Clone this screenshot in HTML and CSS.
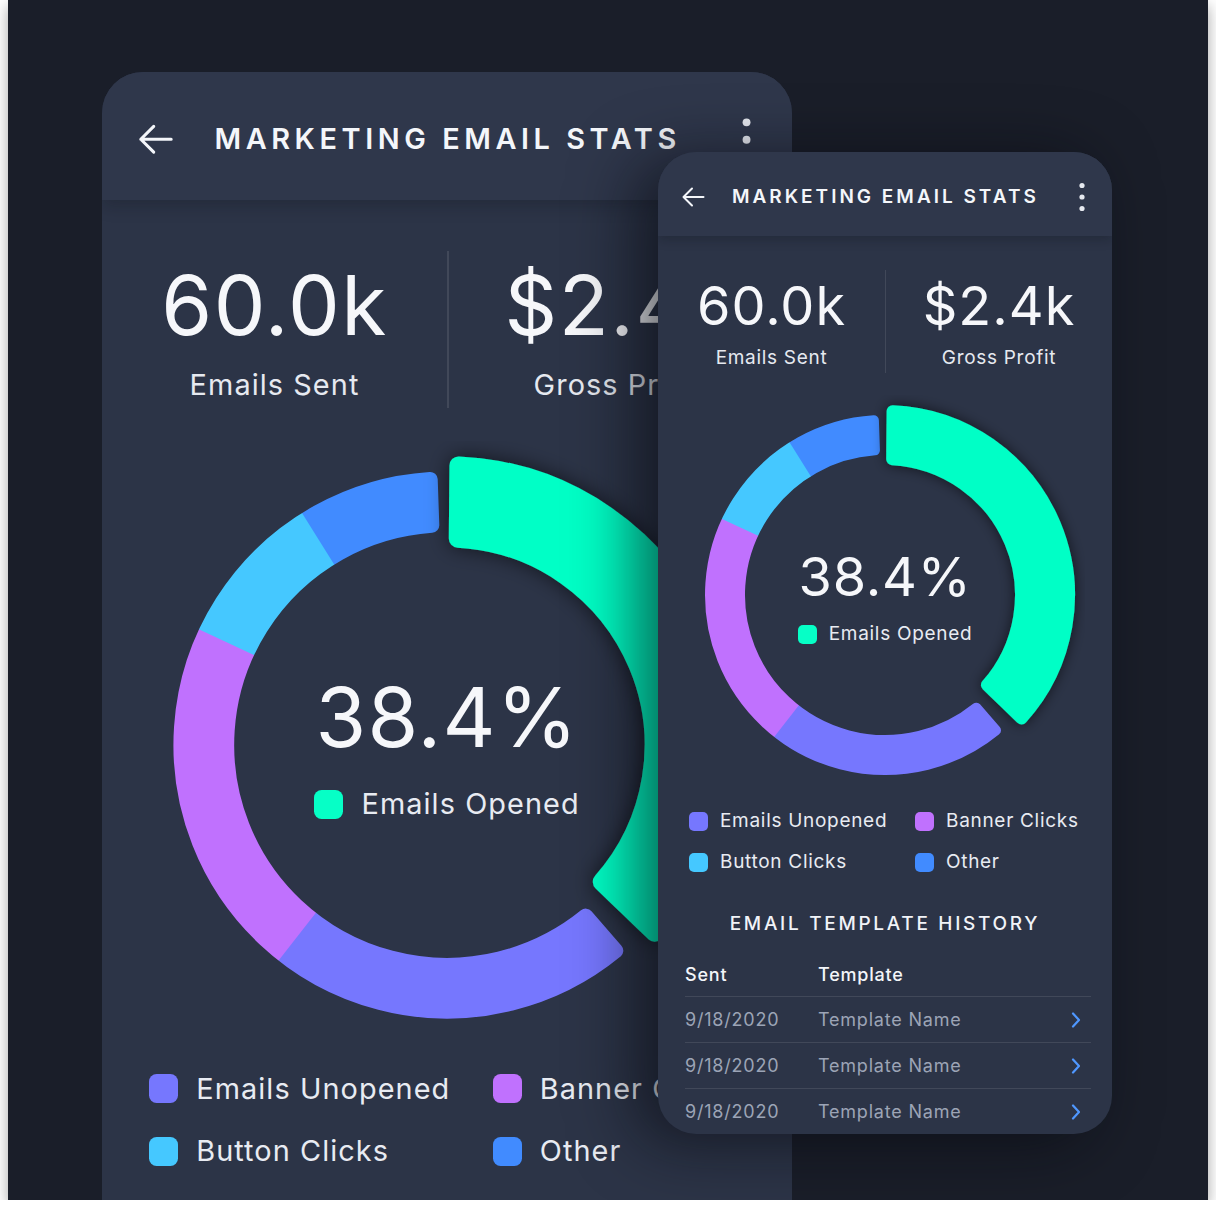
FILE: index.html
```html
<!DOCTYPE html>
<html lang="en">
<head>
<meta charset="utf-8">
<title>Marketing Email Stats</title>
<link rel="stylesheet" href="styles.css">
</head>
<body>
<div class="panel">

  <section class="card card-main">
    <header class="card-header">
      <svg class="icon-back" width="24" height="24" viewBox="0 0 24 24"><path d="M22.5 12H2.5M11 3.5L2.5 12L11 20.5" fill="none" stroke="#f4f6fa" stroke-width="2" stroke-linecap="round" stroke-linejoin="round"/></svg>
      <h1 class="card-title">MARKETING EMAIL STATS</h1>
      <svg class="icon-more" width="6" height="30" viewBox="0 0 6 30"><circle cx="3" cy="3.5" r="2.6" fill="#e6e9f0"/><circle cx="3" cy="15" r="2.6" fill="#e6e9f0"/><circle cx="3" cy="26.5" r="2.6" fill="#e6e9f0"/></svg>
    </header>
    <div class="stats">
      <div class="stat"><div class="stat-value">60.0k</div><div class="stat-label">Emails Sent</div></div>
      <div class="stat"><div class="stat-value">$2.4k</div><div class="stat-label">Gross Profit</div></div>
    </div>
    <div class="donut">
      <svg width="400" height="400" viewBox="0 0 400 400">
        <defs>
          <mask id="ringA" maskUnits="userSpaceOnUse" x="0" y="0" width="400" height="400">
            <path d="M310.99 335.31A175 175 0 1 1 188.89 25.35L189.94 55.35A145 145 0 1 0 291.29 312.65Z" fill="#fff" stroke="#fff" stroke-width="10" stroke-linejoin="round"/>
          </mask>
          <filter id="glowA" x="-30%" y="-30%" width="160%" height="160%">
            <feDropShadow dx="0" dy="0" stdDeviation="7" flood-color="#0e1119" flood-opacity="0.6"/>
          </filter>
        </defs>
        <g mask="url(#ringA)">
          <path d="M200 200L353.21 328.56A200 200 0 0 1 71.44 353.21Z" fill="#7677fe"/>
          <path d="M200 200L76.86 357.60A200 200 0 0 1 21.80 109.20Z" fill="#c071fe"/>
          <path d="M200 200L18.74 115.48A200 200 0 0 1 100.00 26.79Z" fill="#45c8ff"/>
          <path d="M200 200L94.02 30.40A200 200 0 0 1 217.43 0.76Z" fill="#418bff"/>
        </g>
        <path d="M207.61 16.16A184 184 0 0 1 336.49 323.39L301.92 290.05A136 136 0 0 0 207.19 64.19Z" fill="#06ffc6" stroke="#06ffc6" stroke-width="12" stroke-linejoin="round" filter="url(#glowA)"/>
      </svg>
      <div class="donut-center">
        <div class="donut-value">38.4%</div>
        <div class="legend-item"><span class="swatch swatch-green"></span>Emails Opened</div>
      </div>
    </div>
    <div class="legend">
      <div class="legend-item"><span class="swatch swatch-indigo"></span>Emails Unopened</div>
      <div class="legend-item"><span class="swatch swatch-purple"></span>Banner Clicks</div>
      <div class="legend-item"><span class="swatch swatch-sky"></span>Button Clicks</div>
      <div class="legend-item"><span class="swatch swatch-blue"></span>Other</div>
    </div>
    <h2 class="history-title">EMAIL TEMPLATE HISTORY</h2>
    <div class="history">
      <div class="history-row history-head"><span>Sent</span><span>Template</span><span></span></div>
      <div class="history-row"><span>9/18/2020</span><span>Template Name</span><svg class="chev" width="10" height="16" viewBox="0 0 10 16"><path d="M2 1.5L8 8L2 14.5" fill="none" stroke="#4f97ff" stroke-width="2.2" stroke-linecap="round" stroke-linejoin="round"/></svg></div>
      <div class="history-row"><span>9/18/2020</span><span>Template Name</span><svg class="chev" width="10" height="16" viewBox="0 0 10 16"><path d="M2 1.5L8 8L2 14.5" fill="none" stroke="#4f97ff" stroke-width="2.2" stroke-linecap="round" stroke-linejoin="round"/></svg></div>
      <div class="history-row"><span>9/18/2020</span><span>Template Name</span><svg class="chev" width="10" height="16" viewBox="0 0 10 16"><path d="M2 1.5L8 8L2 14.5" fill="none" stroke="#4f97ff" stroke-width="2.2" stroke-linecap="round" stroke-linejoin="round"/></svg></div>
    </div>
  </section>

  <section class="card card-popup">
    <header class="card-header">
      <svg class="icon-back" width="24" height="24" viewBox="0 0 24 24"><path d="M22.5 12H2.5M11 3.5L2.5 12L11 20.5" fill="none" stroke="#f4f6fa" stroke-width="2" stroke-linecap="round" stroke-linejoin="round"/></svg>
      <h1 class="card-title">MARKETING EMAIL STATS</h1>
      <svg class="icon-more" width="6" height="30" viewBox="0 0 6 30"><circle cx="3" cy="3.5" r="2.6" fill="#e6e9f0"/><circle cx="3" cy="15" r="2.6" fill="#e6e9f0"/><circle cx="3" cy="26.5" r="2.6" fill="#e6e9f0"/></svg>
    </header>
    <div class="stats">
      <div class="stat"><div class="stat-value">60.0k</div><div class="stat-label">Emails Sent</div></div>
      <div class="stat"><div class="stat-value">$2.4k</div><div class="stat-label">Gross Profit</div></div>
    </div>
    <div class="donut">
      <svg width="400" height="400" viewBox="0 0 400 400">
        <defs>
          <mask id="ringB" maskUnits="userSpaceOnUse" x="0" y="0" width="400" height="400">
            <path d="M310.99 335.31A175 175 0 1 1 188.89 25.35L189.94 55.35A145 145 0 1 0 291.29 312.65Z" fill="#fff" stroke="#fff" stroke-width="10" stroke-linejoin="round"/>
          </mask>
          <filter id="glowB" x="-30%" y="-30%" width="160%" height="160%">
            <feDropShadow dx="0" dy="0" stdDeviation="7" flood-color="#0e1119" flood-opacity="0.6"/>
          </filter>
        </defs>
        <g mask="url(#ringB)">
          <path d="M200 200L353.21 328.56A200 200 0 0 1 71.44 353.21Z" fill="#7677fe"/>
          <path d="M200 200L76.86 357.60A200 200 0 0 1 21.80 109.20Z" fill="#c071fe"/>
          <path d="M200 200L18.74 115.48A200 200 0 0 1 100.00 26.79Z" fill="#45c8ff"/>
          <path d="M200 200L94.02 30.40A200 200 0 0 1 217.43 0.76Z" fill="#418bff"/>
        </g>
        <path d="M207.61 16.16A184 184 0 0 1 336.49 323.39L301.92 290.05A136 136 0 0 0 207.19 64.19Z" fill="#06ffc6" stroke="#06ffc6" stroke-width="12" stroke-linejoin="round" filter="url(#glowB)"/>
      </svg>
      <div class="donut-center">
        <div class="donut-value">38.4%</div>
        <div class="legend-item"><span class="swatch swatch-green"></span>Emails Opened</div>
      </div>
    </div>
    <div class="legend">
      <div class="legend-item"><span class="swatch swatch-indigo"></span>Emails Unopened</div>
      <div class="legend-item"><span class="swatch swatch-purple"></span>Banner Clicks</div>
      <div class="legend-item"><span class="swatch swatch-sky"></span>Button Clicks</div>
      <div class="legend-item"><span class="swatch swatch-blue"></span>Other</div>
    </div>
    <h2 class="history-title">EMAIL TEMPLATE HISTORY</h2>
    <div class="history">
      <div class="history-row history-head"><span>Sent</span><span>Template</span><span></span></div>
      <div class="history-row"><span>9/18/2020</span><span>Template Name</span><svg class="chev" width="10" height="16" viewBox="0 0 10 16"><path d="M2 1.5L8 8L2 14.5" fill="none" stroke="#4f97ff" stroke-width="2.2" stroke-linecap="round" stroke-linejoin="round"/></svg></div>
      <div class="history-row"><span>9/18/2020</span><span>Template Name</span><svg class="chev" width="10" height="16" viewBox="0 0 10 16"><path d="M2 1.5L8 8L2 14.5" fill="none" stroke="#4f97ff" stroke-width="2.2" stroke-linecap="round" stroke-linejoin="round"/></svg></div>
      <div class="history-row"><span>9/18/2020</span><span>Template Name</span><svg class="chev" width="10" height="16" viewBox="0 0 10 16"><path d="M2 1.5L8 8L2 14.5" fill="none" stroke="#4f97ff" stroke-width="2.2" stroke-linecap="round" stroke-linejoin="round"/></svg></div>
    </div>
  </section>

</div>
</body>
</html>
```

FILE: styles.css
```css
* { box-sizing: border-box; }

html, body {
  margin: 0;
  padding: 0;
  background: #ffffff;
}

body {
  font-family: "Inter", "Open Sans", sans-serif;
  color: #eceff5;
}

.panel {
  position: relative;
  width: 1200px;
  height: 1200px;
  margin-left: 8px;
  padding: 72px 0 0 94px;
  background: #1a1e29;
  overflow: hidden;
  box-shadow: 0 6px 14px rgba(0, 0, 0, 0.35);
}

.card {
  width: 454px;
  height: 982px;
  background: #2c3447;
  border-radius: 38px;
  overflow: hidden;
}

.card-main {
  zoom: 1.52;
  border-radius: 27px 27px 0 0;
}

.card-popup {
  position: absolute;
  left: 650px;
  top: 152px;
  z-index: 2;
  box-shadow: -22px 8px 64px rgba(6, 8, 14, 0.62);
}

/* header */
.card-header {
  position: relative;
  z-index: 1;
  height: 84px;
  display: flex;
  align-items: center;
  padding: 5px 27px 0 23px;
  background: #2f374b;
  box-shadow: 0 4px 10px rgba(10, 12, 20, 0.22);
}

.icon-back { flex: none; }

.card-title {
  flex: 1;
  margin: 0 0 0 27px;
  font-size: 19px;
  font-weight: 600;
  letter-spacing: 3px;
  line-height: 24px;
  color: #f4f6fa;
  white-space: nowrap;
}

.icon-more { flex: none; }

/* stats */
.stats {
  display: grid;
  grid-template-columns: 1fr 1fr;
  height: 103px;
  margin-top: 34px;
}

.stat {
  display: flex;
  flex-direction: column;
  align-items: center;
  padding-top: 6px;
}

.stat + .stat {
  border-left: 1.5px solid rgba(255, 255, 255, 0.1);
}

.stat-value {
  font-size: 54px;
  font-weight: 400;
  line-height: 60px;
  letter-spacing: 1px;
  color: #f6f7fa;
  white-space: nowrap;
}

.stat-label {
  margin-top: 10px;
  font-size: 19px;
  line-height: 24px;
  letter-spacing: 0.7px;
  color: #e6e9f0;
  white-space: nowrap;
}

/* donut */
.donut {
  display: grid;
  width: 400px;
  height: 400px;
  margin: 22px auto 0;
}

.donut > * { grid-area: 1 / 1; }

.donut-center {
  display: flex;
  flex-direction: column;
  align-items: center;
  padding-top: 150px;
}

.donut-value {
  font-size: 54px;
  line-height: 64px;
  letter-spacing: 0.8px;
  color: #f6f7fa;
  margin-bottom: 13px;
}

/* legend */
.legend {
  display: grid;
  grid-template-columns: 226px auto;
  row-gap: 17px;
  padding-left: 31px;
  margin-top: 14px;
}

.legend-item {
  display: flex;
  align-items: center;
  gap: 12px;
  font-size: 19px;
  line-height: 24px;
  letter-spacing: 0.7px;
  color: #e8ebf2;
  white-space: nowrap;
}

.swatch {
  flex: none;
  width: 19px;
  height: 19px;
  border-radius: 5px;
}

.swatch-green { background: #06ffc6; }
.swatch-indigo { background: #7677fe; }
.swatch-purple { background: #c071fe; }
.swatch-sky { background: #45c8ff; }
.swatch-blue { background: #418bff; }

/* history */
.history-title {
  margin: 38px 0 0;
  text-align: center;
  font-size: 19px;
  font-weight: 500;
  line-height: 24px;
  letter-spacing: 2.7px;
  color: #f1f3f8;
}

.history {
  margin: 16px 21px 0 27px;
}

.history-row {
  display: grid;
  grid-template-columns: 133px 1fr auto;
  align-items: center;
  height: 46px;
  padding-right: 10px;
  border-bottom: 1.5px solid rgba(255, 255, 255, 0.1);
  font-size: 18px;
  letter-spacing: 0.8px;
  color: #9ca4b6;
}

.history-head {
  height: 45px;
  font-weight: 500;
  color: #f3f5f9;
}

.chev { display: block; }
```
